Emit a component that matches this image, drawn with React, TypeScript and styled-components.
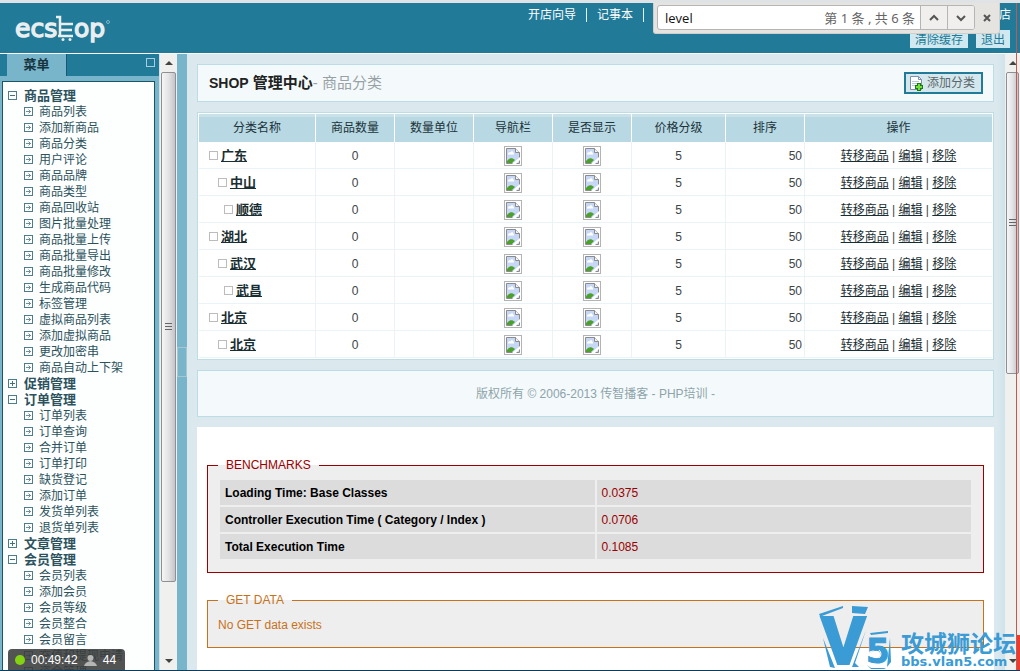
import React from 'react';
import styled, { createGlobalStyle } from 'styled-components';

const teal = '#217a97';
const sky = '#78b5ca';
const sans = '"Liberation Sans", "Noto Sans CJK SC", sans-serif';

const GlobalStyle = createGlobalStyle`
  * { box-sizing: border-box; }
  body { margin: 0; font: 12px/16px ${sans}; color: #3c4448; background: #dbe9ee; }
  button, input { font: inherit; }
  ul { margin: 0; padding: 0; list-style: none; }
`;

const Page = styled.div`
  position: relative;
  display: flex;
  flex-direction: column;
  height: 100vh;
  overflow: hidden;
  border-top: 3px solid #dfe3e5;
  border-bottom: 1px solid #0f3c58;
`;

/* ---------- header ---------- */
const Header = styled.header`
  flex: none;
  display: flex;
  justify-content: space-between;
  height: 51px;
  padding: 0 9px 0 12px;
  background: ${teal};
  border-bottom: 1px solid #fff;
`;
const LogoArt = styled.svg`
  display: block;
  margin-top: 9px;
`;
const HeaderSide = styled.div`
  display: flex;
  flex-direction: column;
  width: 484px;
`;
const TopNav = styled.nav`
  display: flex;
  align-items: center;
  height: 23px;
  padding: 0 0 0 1px;
`;
const TopLink = styled.a<{ $last?: boolean }>`
  color: #fff;
  text-decoration: none;
  line-height: 14px;
  margin-left: ${(p) => (p.$last ? 'auto' : '0')};
  padding-right: ${(p) => (p.$last ? '0' : '10px')};
  margin-right: ${(p) => (p.$last ? '0' : '10px')};
  border-right: ${(p) => (p.$last ? '0' : '1px solid #e4f1f5')};
`;
const HeaderActions = styled.div`
  display: flex;
  justify-content: flex-end;
  gap: 8px;
  padding: 4px 1px 0 0;
`;
const HeaderButton = styled.button`
  height: 18px;
  padding: 2px 5px 0;
  border: 0;
  background: #d0e8ef;
  color: ${teal};
  line-height: 16px;
`;

/* ---------- find bar ---------- */
const FindBar = styled.form`
  position: absolute;
  top: -3px;
  right: 20px;
  display: flex;
  align-items: center;
  width: 347px;
  height: 34px;
  padding: 2px 2px 0 3px;
  background: #e6e4e1;
  border: 1px solid #cfcecb;
  border-top: 0;
  border-radius: 0 0 3px 3px;
`;
const FindField = styled.div`
  flex: 1;
  display: flex;
  align-items: center;
  height: 25px;
  background: #fff;
  border: 1px solid #b5b5b5;
  border-radius: 3px;
  overflow: hidden;
`;
const FindInput = styled.input`
  flex: 1;
  min-width: 0;
  padding: 0 7px;
  border: 0;
  outline: 0;
  background: transparent;
  color: #111;
  font: 13px/16px "Open Sans", sans-serif;
`;
const FindCount = styled.span`
  padding-right: 5px;
  color: #666;
  font: 13px/16px "Noto Sans", "Noto Sans CJK SC", sans-serif;
`;
const FindStep = styled.button`
  display: grid;
  place-items: center;
  width: 27px;
  height: 25px;
  padding: 0;
  border: 0;
  border-left: 1px solid #b5b5b5;
  background: #f0efed;
`;
const FindClose = styled.button`
  display: grid;
  place-items: center;
  width: 22px;
  height: 25px;
  padding: 0 0 0 2px;
  border: 0;
  background: transparent;
`;

/* ---------- body frames ---------- */
const Frames = styled.div`
  flex: 1;
  min-height: 0;
  display: grid;
  grid-template-columns: 160px 17px 10px minmax(0, 1fr) 15px;
`;
const Sidebar = styled.aside`
  display: flex;
  flex-direction: column;
  min-height: 0;
  background: ${sky};
  border-right: 1px solid #cfe2e8;
`;
const TabBar = styled.div`
  flex: none;
  display: flex;
  justify-content: space-between;
  height: 22px;
  padding: 0 4px 0 7px;
  background: ${teal};
`;
const Tab = styled.h2`
  width: 60px;
  margin: 0;
  background: ${sky};
  border-right: 1px solid #165a72;
  color: #16343e;
  font-size: 13px;
  line-height: 22px;
  text-align: center;
`;
const Collapse = styled.button`
  width: 9px;
  height: 9px;
  margin-top: 4px;
  padding: 0;
  border: 1px solid #a9cfdc;
  background: transparent;
`;
const MenuBox = styled.nav`
  flex: 1;
  min-height: 0;
  overflow: hidden;
  margin: 5px 4px 0 2px;
  padding: 5px 0 0 5px;
  background: #fdfefe;
  border: 1px solid #1c5568;
  border-bottom: 0;
`;
const MenuLine = styled.div<{ $group?: boolean }>`
  display: flex;
  align-items: center;
  gap: ${(p) => (p.$group ? '7px' : '6px')};
  height: 16px;
  padding-left: ${(p) => (p.$group ? '0' : '16px')};
  font-size: ${(p) => (p.$group ? '13px' : '12px')};
  font-weight: ${(p) => (p.$group ? 'bold' : 'normal')};
  line-height: 18px;
  white-space: nowrap;
`;
const MenuLink = styled.a`
  padding-top: 1px;
  color: #2b525d;
  text-decoration: none;
`;

const Scroll = styled.div`
  display: flex;
  flex-direction: column;
  align-items: center;
  justify-content: space-between;
  min-height: 0;
  padding: 0 1px;
  background: #f0f0ef;
`;
const ScrollCap = styled.div`
  flex: none;
  display: grid;
  place-items: center;
  height: 18px;
`;
const Track = styled.div`
  flex: 1;
  width: 100%;
  min-height: 0;
`;
const Thumb = styled.div<{ $share: string }>`
  display: grid;
  place-items: center;
  height: ${(p) => p.$share};
  border: 1px solid #8f8f93;
  border-radius: 2px;
  background: linear-gradient(90deg, #f6f6f6, #e3e3e5 50%, #c4c4c9);
`;
const Splitter = styled.div`
  display: flex;
  flex-direction: column;
  justify-content: center;
  background: ${sky};
`;
const SplitterGrip = styled.button`
  height: 30px;
  padding: 0;
  border: 1px solid #a6c6d0;
  background: transparent;
`;

/* ---------- main ---------- */
const Main = styled.main`
  display: flex;
  flex-direction: column;
  gap: 10px;
  min-height: 0;
  overflow: hidden;
  padding: 10px 11px 0 10px;
  background: linear-gradient(90deg, #dbe9ee 0 99%, #cfe3ea);
`;
const TitleBar = styled.div`
  flex: none;
  display: flex;
  align-items: center;
  justify-content: space-between;
  height: 38px;
  padding: 0 10px 0 11px;
  background: #f4fafb;
  border: 1px solid #bbdde5;
`;
const Title = styled.h1`
  margin: 0;
  color: #222;
  font-size: 15px;
  line-height: 20px;
`;
const Brand = styled.span`
  font-size: 14px;
`;
const SubTitle = styled.span`
  color: #98a2a6;
  font-weight: normal;
`;
const AddButton = styled.button`
  display: flex;
  align-items: center;
  gap: 3px;
  height: 22px;
  padding: 0 6px 0 3px;
  border: 2px solid ${teal};
  background: #d3e7ed;
  color: #5c666a;
`;
const ListPanel = styled.div`
  flex: none;
  padding: 1px;
  background: #fff;
  border: 1px solid #bbdde5;
`;
const Categories = styled.table`
  width: 100%;
  table-layout: fixed;
  border-collapse: separate;
  border-spacing: 0;
`;
const Col = styled.col<{ $w?: number }>`
  width: ${(p) => (p.$w ? `${p.$w}px` : 'auto')};
`;
const Th = styled.th`
  height: 28px;
  padding: 0;
  background: linear-gradient(#cae1e8 0 3px, #b8d8e3 3px);
  color: #1b333a;
  font-weight: normal;
  line-height: 18px;
  & + & { border-left: 1px solid #fff; }
`;
const Td = styled.td<{ $align?: string }>`
  height: 27px;
  padding: 1px 2px 0;
  border-bottom: 1px solid #eaf3f6;
  text-align: ${(p) => p.$align ?? 'center'};
  line-height: 16px;
  & + & { border-left: 1px solid #eaf3f6; }
  svg { display: block; margin: 0 auto; }
`;
const Name = styled.div<{ $level: number }>`
  display: flex;
  align-items: center;
  gap: 3px;
  padding-left: ${(p) => [8, 17, 23][p.$level]}px;
`;
const Marker = styled.span`
  width: 9px;
  height: 9px;
  border: 1px solid #bcbcbc;
`;
const NameLink = styled.a`
  color: #192e32;
  font-size: 13px;
  font-weight: bold;
`;
const ActionLink = styled.a`
  color: #192e32;
`;
const Copyright = styled.footer`
  flex: none;
  height: 47px;
  background: #f4fafb;
  border: 1px solid #bbdde5;
  color: #8ea3aa;
  line-height: 47px;
  text-align: center;
`;
const Profiler = styled.section`
  flex: 1;
  display: flex;
  flex-direction: column;
  gap: 19px;
  padding: 30px 10px 0;
  background: #fff;
`;
const Box = styled.fieldset<{ $color: string }>`
  flex: none;
  min-width: 0;
  margin: 0;
  padding: 5px 10px 11px;
  border: 1px solid ${(p) => p.$color};
  background: #eee;
  color: ${(p) => p.$color};
`;
const Legend = styled.legend`
  padding: 0 8px;
  line-height: 16px;
`;
const Bench = styled.table`
  width: 100%;
  table-layout: fixed;
  border-collapse: separate;
  border-spacing: 2px;
  color: #990000;
`;
const BenchCell = styled.td`
  height: 25px;
  padding: 0 5px;
  background: #dcdcdc;
`;
const BenchName = styled.th`
  padding: 0 5px;
  background: #dcdcdc;
  color: #000;
  text-align: left;
`;
const Note = styled.p`
  margin: 4px 0 3px;
`;

/* ---------- overlays ---------- */
const Recorder = styled.div`
  position: absolute;
  left: 8px;
  bottom: -1px;
  display: flex;
  align-items: center;
  gap: 6px;
  width: 117px;
  height: 22px;
  padding: 0 7px;
  border-radius: 4px 4px 0 0;
  background: rgba(58, 60, 60, 0.88);
  color: #fff;
`;
const Watermark = styled.div`
  position: absolute;
  right: 4px;
  bottom: 0;
  display: flex;
  align-items: flex-end;
  gap: 8px;
  color: #3a9bd5;
`;
const WatermarkText = styled.div`
  font: bold 23px/24px "Noto Sans CJK SC", sans-serif;
  white-space: nowrap;
`;
const WatermarkHost = styled.div`
  font: bold 13px/16px "DejaVu Sans", sans-serif;
`;
const RedLine = styled.div`
  position: absolute;
  top: -3px;
  bottom: 0;
  right: 3px;
  width: 1px;
  background: #c4574f;
`;
const RedBlock = styled.div`
  position: absolute;
  bottom: 0;
  right: 0;
  width: 3px;
  height: 35px;
  background: #ef3b2c;
`;

const menu = [
  {
    name: '商品管理',
    items: ['商品列表', '添加新商品', '商品分类', '用户评论', '商品品牌', '商品类型', '商品回收站', '图片批量处理', '商品批量上传', '商品批量导出', '商品批量修改', '生成商品代码', '标签管理', '虚拟商品列表', '添加虚拟商品', '更改加密串', '商品自动上下架'],
  },
  { name: '促销管理', items: [] },
  { name: '订单管理', items: ['订单列表', '订单查询', '合并订单', '订单打印', '缺货登记', '添加订单', '发货单列表', '退货单列表'] },
  { name: '文章管理', items: [] },
  { name: '会员管理', items: ['会员列表', '添加会员', '会员等级', '会员整合', '会员留言', '充值和提现申请', '资金管理'] },
];

const rows: [string, number][] = [
  ['广东', 0], ['中山', 1], ['顺德', 2], ['湖北', 0], ['武汉', 1], ['武昌', 2], ['北京', 0], ['北京', 1],
];
const heads = ['分类名称', '商品数量', '数量单位', '导航栏', '是否显示', '价格分级', '排序', '操作'];
const widths = [116, 79, 79, 79, 79, 94, 79, undefined];
const bench = [
  ['Loading Time: Base Classes', '0.0375'],
  ['Controller Execution Time ( Category / Index )', '0.0706'],
  ['Total Execution Time', '0.1085'],
];

const boxPaths = {
  plus: 'M2 4.5h5M4.5 2v5',
  minus: 'M2 4.5h5',
  arrow: 'M2 4.5h5M4.5 2.5l2 2l-2 2',
};
const BoxIcon = ({ kind }: { kind: keyof typeof boxPaths }) => (
  <svg width="9" height="9" viewBox="0 0 9 9" fill="none" stroke={kind === 'arrow' ? '#6f8f99' : '#44707d'}>
    <rect x=".5" y=".5" width="8" height="8" stroke="#4f7c89" />
    <path d={boxPaths[kind]} />
  </svg>
);

const BrokenImage = () => (
  <svg width="18" height="20" viewBox="0 0 18 20" role="img" aria-label="image">
    <rect x=".5" y=".5" width="17" height="19" fill="#fff" stroke="#b3b3b3" />
    <path d="M2.5 2.5h9l4 4v11h-13z" fill="#c6d8f5" stroke="#8b8b8b" />
    <path d="M4 8c0-2 2-2 2.500-1.500C7 4.500 9.500 5 9.500 7H10v1.500H4z" fill="#fff" />
    <path d="M3 17v-2c2-3 5-4 8-1l-3 3z" fill="#4ca02c" />
    <path d="M11.500 2.500v4h4" fill="#f4f4f4" stroke="#8b8b8b" />
    <path d="M8 18l8-7v3l-4 4z" fill="#fff" />
  </svg>
);

const Logo = () => (
  <LogoArt width="98" height="36" viewBox="0 0 98 36" role="img" aria-label="ecshop">
    <g fill="#e9eef0" stroke="#e9eef0" strokeWidth="1.400" fontFamily="DejaVu Sans" fontSize="25">
      <text x="3" y="25">ecs</text>
      <text x="62" y="25">op</text>
    </g>
    <g fill="none" stroke="#e9eef0" strokeWidth="2.500">
      <path d="M44 5h4v20" />
      <path d="M47 12h14M48 18h12M46 24h15" />
    </g>
    <circle cx="51" cy="27.500" r="1.500" fill="#e9eef0" />
    <circle cx="58" cy="27.500" r="1.500" fill="#e9eef0" />
    <circle cx="96" cy="10" r="1.500" fill="none" stroke="#7fb4c6" />
  </LogoArt>
);

const Arrow = ({ down }: { down?: boolean }) => (
  <svg width="8" height="5" viewBox="0 0 8 5"><path d={down ? 'M0 0h8L4 4z' : 'M0 4h8L4 0z'} fill="#444" /></svg>
);
const ScrollBar = ({ share }: { share: string }) => (
  <Scroll>
    <ScrollCap><Arrow /></ScrollCap>
    <Track>
      <Thumb $share={share}>
        <svg width="7" height="8" viewBox="0 0 7 8"><path d="M0 .5h7M0 3.500h7M0 6.500h7" stroke="#666" /></svg>
      </Thumb>
    </Track>
    <ScrollCap><Arrow down /></ScrollCap>
  </Scroll>
);

export default function App() {
  return (
    <Page>
      <GlobalStyle />
      <Header>
        <Logo />
        <HeaderSide>
          <TopNav>
            <TopLink href="#guide">开店向导</TopLink>
            <TopLink href="#notes">记事本</TopLink>
            <TopLink href="#shop" $last>店</TopLink>
          </TopNav>
          <HeaderActions>
            <HeaderButton>清除缓存</HeaderButton>
            <HeaderButton>退出</HeaderButton>
          </HeaderActions>
        </HeaderSide>
      </Header>

      <Frames>
        <Sidebar>
          <TabBar>
            <Tab>菜单</Tab>
            <Collapse aria-label="collapse" />
          </TabBar>
          <MenuBox>
            <ul>
              {menu.map((group) => (
                <li key={group.name}>
                  <MenuLine $group>
                    <BoxIcon kind={group.items.length ? 'minus' : 'plus'} />
                    <MenuLink href="#menu">{group.name}</MenuLink>
                  </MenuLine>
                  <ul>
                    {group.items.map((item) => (
                      <li key={item}>
                        <MenuLine>
                          <BoxIcon kind="arrow" />
                          <MenuLink href="#item">{item}</MenuLink>
                        </MenuLine>
                      </li>
                    ))}
                  </ul>
                </li>
              ))}
            </ul>
          </MenuBox>
        </Sidebar>
        <ScrollBar share="88%" />
        <Splitter><SplitterGrip aria-label="toggle menu" /></Splitter>

        <Main>
          <TitleBar>
            <Title><Brand>SHOP</Brand> 管理中心<SubTitle>- 商品分类</SubTitle></Title>
            <AddButton>
              <svg width="15" height="16" viewBox="0 0 15 16">
                <path d="M1.500 1.500h8l3 3v10h-11z" fill="#fff" stroke="#7d8fb3" />
                <path d="M9.500 1.500v3h3" fill="none" stroke="#7d8fb3" />
                <path d="M3 6.500h7M3 8.500h6M3 10.500h4" stroke="#b9c9df" />
                <path d="M8 8h4v2h2v4h-2v2H8v-2H6v-4h2z" fill="#1d7a12" />
                <path d="M9 9h2v2h2v2h-2v2H9v-2H7v-2h2z" fill="#6fe03c" />
              </svg>
              添加分类
            </AddButton>
          </TitleBar>

          <ListPanel>
            <Categories>
              <colgroup>{widths.map((w, i) => <Col key={i} $w={w} />)}</colgroup>
              <thead>
                <tr>{heads.map((h) => <Th key={h}>{h}</Th>)}</tr>
              </thead>
              <tbody>
                {rows.map(([name, level], i) => (
                  <tr key={i}>
                    <Td $align="left">
                      <Name $level={level}><Marker /><NameLink href="#category">{name}</NameLink></Name>
                    </Td>
                    <Td>0</Td>
                    <Td />
                    <Td><BrokenImage /></Td>
                    <Td><BrokenImage /></Td>
                    <Td>5</Td>
                    <Td $align="right">50</Td>
                    <Td>
                      <ActionLink href="#move">转移商品</ActionLink> | <ActionLink href="#edit">编辑</ActionLink> | <ActionLink href="#remove">移除</ActionLink>
                    </Td>
                  </tr>
                ))}
              </tbody>
            </Categories>
          </ListPanel>

          <Copyright>版权所有 © 2006-2013 传智播客 - PHP培训 -</Copyright>

          <Profiler>
            <Box $color="#990000">
              <Legend>BENCHMARKS</Legend>
              <Bench>
                <tbody>
                  {bench.map(([name, time]) => (
                    <tr key={name}>
                      <BenchName scope="row">{name}</BenchName>
                      <BenchCell>{time}</BenchCell>
                    </tr>
                  ))}
                </tbody>
              </Bench>
            </Box>
            <Box $color="#c7721b">
              <Legend>GET DATA</Legend>
              <Note>No GET data exists</Note>
            </Box>
          </Profiler>
        </Main>
        <ScrollBar share="52%" />
      </Frames>

      <FindBar>
        <FindField>
          <FindInput aria-label="find" defaultValue="level" />
          <FindCount>第 1 条 , 共 6 条</FindCount>
          <FindStep type="button" aria-label="previous">
            <svg width="12" height="8" viewBox="0 0 12 8"><path d="M2 6l4-4l4 4" fill="none" stroke="#555" strokeWidth="2" /></svg>
          </FindStep>
          <FindStep type="button" aria-label="next">
            <svg width="12" height="8" viewBox="0 0 12 8"><path d="M2 2l4 4l4-4" fill="none" stroke="#555" strokeWidth="2" /></svg>
          </FindStep>
        </FindField>
        <FindClose type="button" aria-label="close">
          <svg width="8" height="8" viewBox="0 0 8 8"><path d="M1 1l6 6M7 1l-6 6" stroke="#555" strokeWidth="2" /></svg>
        </FindClose>
      </FindBar>

      <Watermark>
        <svg width="76" height="64" viewBox="0 0 76 64" role="img" aria-label="V5">
          <g fill="#3a9bd5">
            <path d="M2 8L26 0v2L5 10l3 10z" />
            <path d="M35 0l16 1-3 7-13-1z" />
            <path d="M6 32l12 30-5-1zM49 24l-14 37 7 0-4-4z" />
            <path d="M53 27l18-2v2l-17 2z" />
            <path d="M73 32l1 24-4 5z" />
            <path d="M50 59l4 3 15 0-2 1-13 0z" />
          </g>
          <text x="5" y="57" fill="#3a9bd5" stroke="#3a9bd5" strokeWidth="4" fontFamily="Liberation Sans" fontWeight="bold" fontSize="64">V</text>
          <text x="49" y="57" fill="#3a9bd5" stroke="#3a9bd5" strokeWidth="1" fontFamily="DejaVu Sans" fontWeight="bold" fontSize="34">5</text>
          <path d="M50 48q6-6 12 0q-6 5-12 0zM62 44q4 4 0 8M54 48h5" fill="none" stroke="#fff" />
        </svg>
        <div>
          <WatermarkText>攻城狮论坛</WatermarkText>
          <WatermarkHost>bbs.vlan5.com</WatermarkHost>
        </div>
      </Watermark>
      <Recorder>
        <svg width="10" height="10" viewBox="0 0 10 10"><circle cx="5" cy="5" r="5" fill="#84d312" /></svg>
        <span>00:49:42</span>
        <svg width="13" height="11" viewBox="0 0 13 11"><circle cx="6.500" cy="3" r="3" fill="#b5b5b5" /><path d="M0 11q1-4 6.500-5q5.500 1 6.500 5z" fill="#b5b5b5" /></svg>
        <span>44</span>
      </Recorder>
      <RedLine />
      <RedBlock />
    </Page>
  );
}
